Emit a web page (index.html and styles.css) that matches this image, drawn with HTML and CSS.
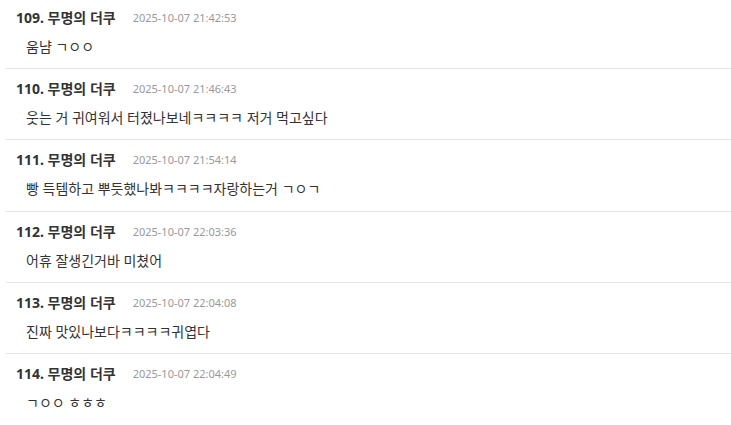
FILE: index.html
```html
<!DOCTYPE html>
<html lang="ko">
<head>
  <meta charset="UTF-8" />
  <meta name="viewport" content="width=device-width, initial-scale=1.0" />
  <title>댓글</title>
  <link rel="stylesheet" href="styles.css">
</head>
<body>

<!-- Comment list -->
<ul class="comments">
  <li class="comment">
    <div class="comment-head">
      <span class="comment-name">109. 무명의 더쿠</span>
      <span class="comment-date">2025-10-07 21:42:53</span>
    </div>
    <p class="comment-body">움냠 ㄱㅇㅇ</p>
  </li>
  <li class="comment">
    <div class="comment-head">
      <span class="comment-name">110. 무명의 더쿠</span>
      <span class="comment-date">2025-10-07 21:46:43</span>
    </div>
    <p class="comment-body">웃는 거 귀여워서 터졌나보네ㅋㅋㅋㅋ 저거 먹고싶다</p>
  </li>
  <li class="comment">
    <div class="comment-head">
      <span class="comment-name">111. 무명의 더쿠</span>
      <span class="comment-date">2025-10-07 21:54:14</span>
    </div>
    <p class="comment-body">빵 득템하고 뿌듯했나봐ㅋㅋㅋㅋ자랑하는거 ㄱㅇㄱ</p>
  </li>
  <li class="comment">
    <div class="comment-head">
      <span class="comment-name">112. 무명의 더쿠</span>
      <span class="comment-date">2025-10-07 22:03:36</span>
    </div>
    <p class="comment-body">어휴 잘생긴거바 미쳤어</p>
  </li>
  <li class="comment">
    <div class="comment-head">
      <span class="comment-name">113. 무명의 더쿠</span>
      <span class="comment-date">2025-10-07 22:04:08</span>
    </div>
    <p class="comment-body">진짜 맛있나보다ㅋㅋㅋㅋ귀엽다</p>
  </li>
  <li class="comment">
    <div class="comment-head">
      <span class="comment-name">114. 무명의 더쿠</span>
      <span class="comment-date">2025-10-07 22:04:49</span>
    </div>
    <p class="comment-body">ㄱㅇㅇ ㅎㅎㅎ</p>
  </li>
</ul>

</body>
</html>
```

FILE: styles.css
```css
* { margin: 0; padding: 0; box-sizing: border-box; }

body {
  font-family: "Noto Sans", "Noto Sans CJK KR", sans-serif;
  background: #fff;
  color: #333;
}

.comments {
  list-style: none;
  margin: -2.5px 0 0 6px;
}

.comment {
  padding: 11px 0 11.4px 10px;
  border-bottom: 1px solid #e6e6e6;
}

.comment-head {
  display: flex;
  align-items: center;
  line-height: 17px;
}

.comment-name {
  font-size: 14px;
  font-weight: bold;
  color: #333;
}

.comment-date {
  margin-left: 17px;
  font-size: 11px;
  color: #999;
}

.comment-body {
  margin-top: 10px;
  padding-left: 10px;
  font-size: 14px;
  line-height: 21px;
  color: #333;
}
```
